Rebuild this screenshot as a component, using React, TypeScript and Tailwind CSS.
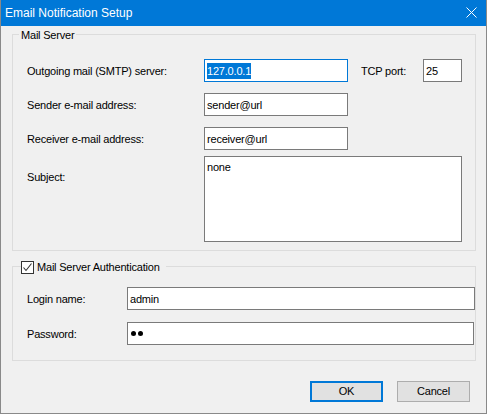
import React from "react";

const font = { fontFamily: '"Liberation Sans", Arial, sans-serif' };

function Field({ w, h = 23, children, focus = false }: { w: number; h?: number; children?: React.ReactNode; focus?: boolean }) {
  return (
    <div
      className={`flex items-center bg-white pl-[2px] text-[11px] tracking-[-0.2px] text-black border ${focus ? "border-[#0078d7]" : "border-[#7a7a7a]"}`}
      style={{ width: w, height: h }}
    >
      {children}
    </div>
  );
}

export default function App() {
  return (
    <div className="w-[487px] h-[414px] bg-[#f0f0f0] border-x border-b border-[#898989] flex flex-col" style={font}>
      {/* Title bar */}
      <div className="h-[26px] bg-[#0078d7] flex items-center justify-between pl-[4px] pr-[9px] text-white text-[12px] leading-[14px]">
        <span>Email Notification Setup</span>
        <svg width="11" height="11" viewBox="0 0 11 11" className="mb-[1px]">
          <path d="M0.5 0.5 L10.5 10.5 M10.5 0.5 L0.5 10.5" stroke="white" strokeWidth="1" fill="none" />
        </svg>
      </div>

      {/* Mail Server group */}
      <div className="relative ml-[11px] mt-[8px] w-[464px] h-[217px] border border-[#dcdcdc] pt-[24px] pl-[14px] text-[11px] leading-[14px] tracking-[-0.2px] text-black">
        <span className="absolute left-[6px] top-[-7px] px-[2px] bg-[#f0f0f0] leading-[14px]">Mail Server</span>

        <div className="flex items-center h-[23px]">
          <span className="w-[177px]">Outgoing mail (SMTP) server:</span>
          <Field w={144} focus>
            <span className="bg-[#0078d7] text-white leading-[16px]">127.0.0.1</span>
          </Field>
          <span className="ml-[13px] w-[62px]">TCP port:</span>
          <Field w={39}>25</Field>
        </div>

        <div className="flex items-center h-[23px] mt-[11px]">
          <span className="w-[177px]">Sender e-mail address:</span>
          <Field w={144}>sender@url</Field>
        </div>

        <div className="flex items-center h-[23px] mt-[11px]">
          <span className="w-[177px]">Receiver e-mail address:</span>
          <Field w={144}>receiver@url</Field>
        </div>

        <div className="flex mt-[6px]">
          <span className="w-[177px] pt-[14px]">Subject:</span>
          <div className="w-[258px] h-[86px] bg-white border border-[#7a7a7a] pl-[2px] pt-[3px]">none</div>
        </div>
      </div>

      {/* Authentication group */}
      <div className="relative ml-[11px] mt-[15px] w-[464px] h-[95px] border border-[#dcdcdc] pt-[20px] pl-[14px] text-[11px] leading-[14px] tracking-[-0.2px] text-black">
        <div className="absolute left-[8px] top-[-7px] h-[14px] flex items-center pr-[6px] bg-[#f0f0f0]">
          <div className="w-[13px] h-[13px] border border-[#333333] bg-white flex items-center justify-center">
            <svg width="11" height="11" viewBox="0 0 11 11">
              <path d="M1.5 5.5 L4 8.5 L9.5 1.5" stroke="#333333" strokeWidth="1.1" fill="none" />
            </svg>
          </div>
          <span className="ml-[3px]">Mail Server Authentication</span>
        </div>

        <div className="flex items-center h-[23px]">
          <span className="w-[100px]">Login name:</span>
          <Field w={348}>admin</Field>
        </div>
        <div className="flex items-center h-[23px] mt-[12px]">
          <span className="w-[100px]">Password:</span>
          <Field w={347}>
            <span className="flex gap-[2px] ml-[1px]">
              <span className="w-[5px] h-[5px] rounded-full bg-black" />
              <span className="w-[5px] h-[5px] rounded-full bg-black" />
            </span>
          </Field>
        </div>
      </div>

      {/* Buttons */}
      <div className="flex justify-end gap-[14px] mt-[20px] pr-[16px] text-[11px] tracking-[-0.2px] text-black">
        <div className="w-[73px] h-[21px] border-2 border-[#0078d7] bg-[#e1e1e1] flex items-center justify-center">OK</div>
        <div className="w-[73px] h-[21px] border border-[#adadad] bg-[#e1e1e1] flex items-center justify-center">Cancel</div>
      </div>
    </div>
  );
}
